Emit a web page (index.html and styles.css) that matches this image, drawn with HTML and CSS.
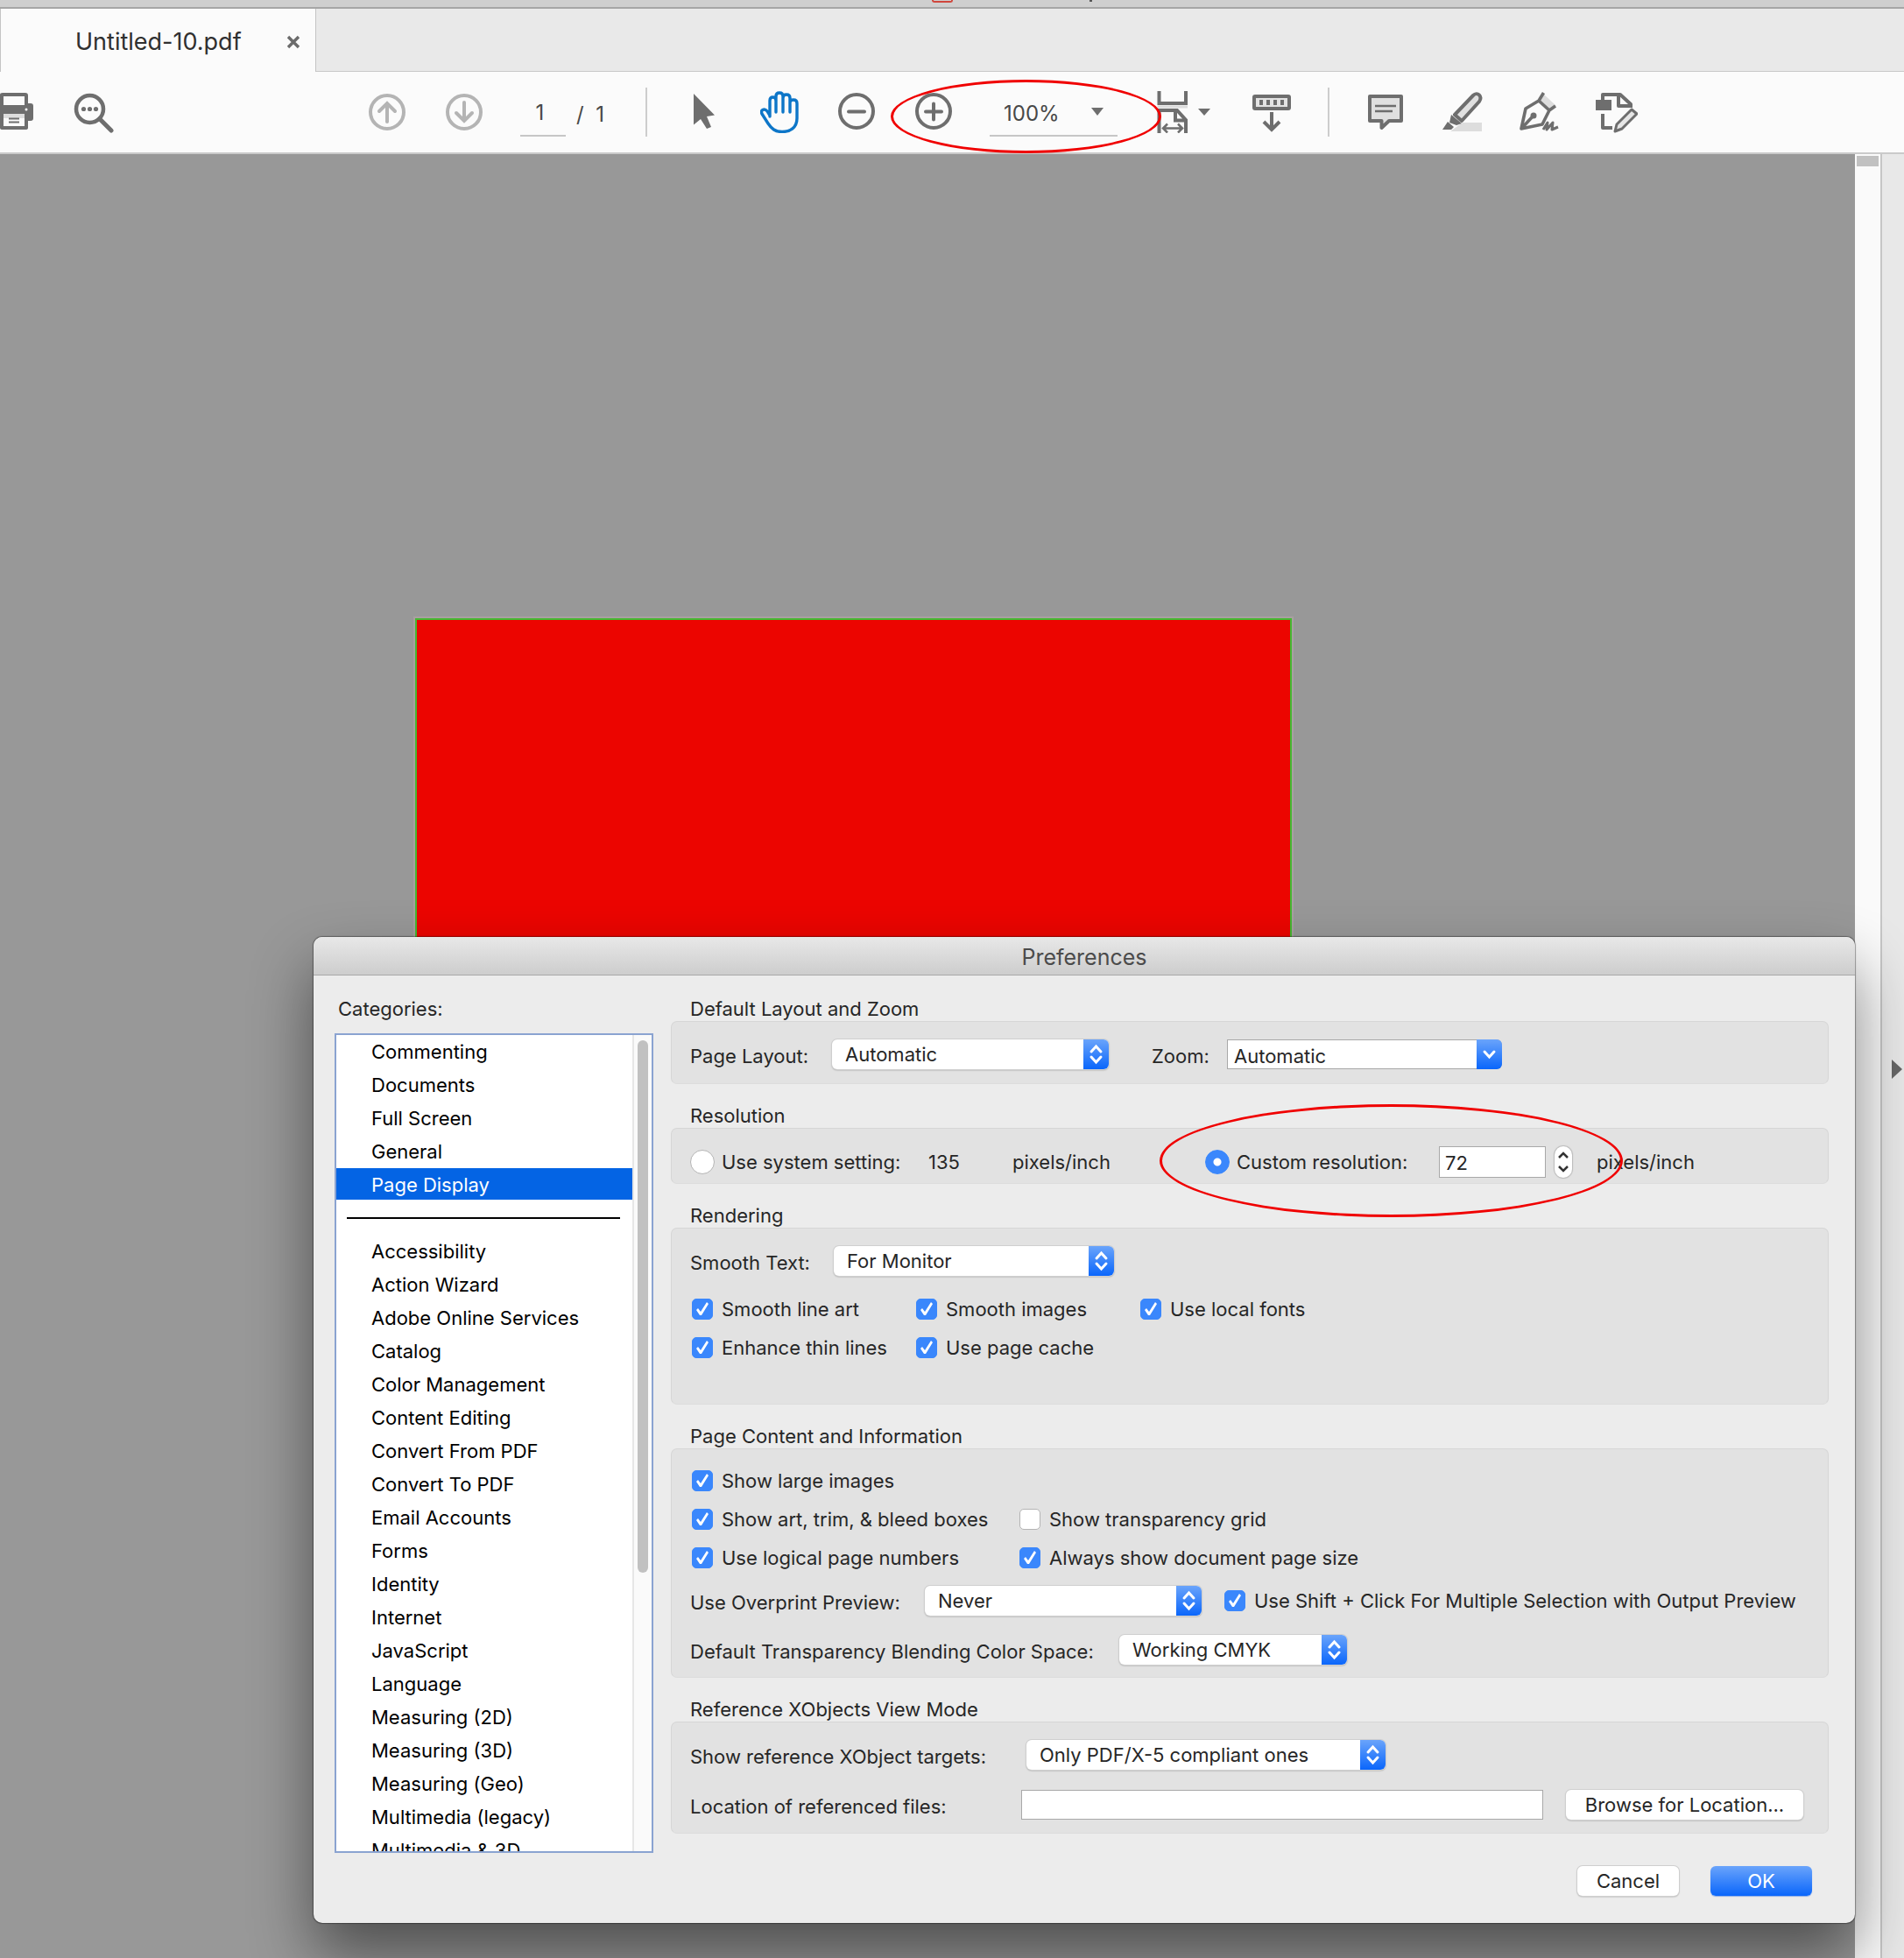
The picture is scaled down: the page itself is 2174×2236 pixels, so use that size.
FILE: index.html
```html
<!DOCTYPE html>
<html lang="en">
<head>
<meta charset="utf-8">
<title>Untitled-10.pdf</title>
<link rel="stylesheet" href="styles.css">
</head>
<body>
<div class="app">
  <div class="titlebar"><span class="title-icon"></span><span class="title-mark"></span></div>
  <nav class="tabs">
    <div class="tab"><a class="tab-name" href="#document">Untitled-10.pdf</a>
      <button class="tab-close" aria-label="Close tab"><svg width="16" height="16" viewBox="0 0 16 16"><path d="M2 2L14 14M14 2L2 14" stroke="#6b6b6b" stroke-width="3.400"/></svg></button>
    </div>
  </nav>
  <div class="toolbar">
    <button class="tool tool-print" aria-label="Print"><svg class="icon" viewBox="0 0 48 48"><path d="M0 4q0-2 3-2h26q3 0 3 3v9h3q3 0 3 3v14q0 3-3 3h-3v8q0 2-3 2H3q-3 0-3-2z" fill="#6e6e6e"/><path d="M4 6h24v10H4zM4 30h24v10H4z" fill="#fbfbfb"/><path d="M4 26h24v5H4z" fill="#ddd"/><path d="M10 31.500h12M10 35.500h12" stroke="#6e6e6e" stroke-width="2"/><circle cx="30" cy="21" r="1.500" fill="#fff"/></svg></button>
    <button class="tool" aria-label="Find"><svg class="icon" viewBox="0 0 48 48"><circle cx="19.500" cy="20.500" r="15.500" fill="none" stroke="#6e6e6e" stroke-width="4.500"/><path d="M31 32L44 45" stroke="#6e6e6e" stroke-width="5" stroke-linecap="round"/><g fill="#6e6e6e"><circle cx="12.500" cy="20.500" r="2.600"/><circle cx="19.500" cy="20.500" r="2.600"/><circle cx="26.500" cy="20.500" r="2.600"/></g></svg></button>
    <button class="tool tool-first" aria-label="Previous page"><svg class="icon" viewBox="0 0 48 48"><g fill="none" stroke="#b4b4b4" stroke-width="4"><circle cx="24" cy="24" r="19"/><path d="M24 35V15M15 23L24 14L33 23" stroke-linecap="round"/></g></svg></button>
    <button class="tool" aria-label="Next page"><svg class="icon" viewBox="0 0 48 48"><g fill="none" stroke="#b4b4b4" stroke-width="4"><circle cx="24" cy="24" r="19"/><path d="M24 13V33M15 25L24 34L33 25" stroke-linecap="round"/></g></svg></button>
    <input class="page-input" aria-label="Page number" value="1">
    <span class="page-total">/&nbsp; 1</span>
    <span class="divider"></span>
    <button class="tool" aria-label="Select"><svg class="icon" viewBox="0 0 48 48"><path d="M12 3L36 27.500L27 29L32 41L27 43L20 32L12 38.500z" fill="#6e6e6e"/></svg></button>
    <button class="tool" aria-label="Pan"><svg class="icon" viewBox="0 0 48 48"><path d="M11 29V11q0-4 3.500-4t3.500 4V24M18 12V6q0-4 4-4t4 4V24M26 8q0-4 4-4t4 4V24M34 13q0-3 4-3t4 4V31C42 42 34 46.500 25 46.500C17 46.500 13 43 9 37L2 26C0 21 5 19.500 8 23L11 28" fill="none" stroke="#0d76c8" stroke-width="3.400" stroke-linecap="round" stroke-linejoin="round"/></svg></button>
    <button class="tool" aria-label="Zoom out"><svg class="icon" viewBox="0 0 48 48"><g fill="none" stroke="#6e6e6e" stroke-width="4"><circle cx="22" cy="23" r="19"/><path d="M13 23.500H31" stroke-linecap="round"/></g></svg></button>
    <div class="zoom-group">
      <button class="tool" aria-label="Zoom in"><svg class="icon" viewBox="0 0 48 48"><g fill="none" stroke="#6e6e6e" stroke-width="4"><circle cx="22" cy="23" r="19"/><path d="M13 23.500H31M22 14.500V32.500" stroke-linecap="round"/></g></svg></button>
      <button class="zoom-value"><span>100%</span><svg width="14" height="9" viewBox="0 0 14 9"><path d="M0 0h14L7 9z" fill="#6e6e6e"/></svg></button>
      <span class="mark mark-zoom"></span>
    </div>
    <button class="tool-fit" aria-label="Fit width"><svg class="icon-wide" viewBox="0 0 72 48"><path d="M7.500 0V14H38V0" fill="none" stroke="#6e6e6e" stroke-width="4"/><path d="M5.500 16.500h34.500v3H5.500z" fill="#ddd"/><g fill="none" stroke="#6e6e6e"><path d="M7.500 48V22H28L38 33V48M26 22V33.500H38" stroke-width="4"/><path d="M13 42.500H33M17 37.500L12 42.500L17 47.500M29 37.500L34 42.500L29 47.500" stroke-width="2.500"/></g><path d="M52 20h14l-7 8z" fill="#6e6e6e"/></svg></button>
    <button class="tool tool-keys" aria-label="Scroll mode"><svg class="icon" viewBox="0 0 48 48"><rect x="4" y="6" width="40" height="14" rx="1" fill="#e3e3e3" stroke="#6e6e6e" stroke-width="4"/><path d="M12 10v6M20 10v6M28 10v6M36 10v6" stroke="#6e6e6e" stroke-width="4"/><path d="M24 24V43M15 35L24 44L33 35" fill="none" stroke="#6e6e6e" stroke-width="4"/></svg></button>
    <span class="divider divider-end"></span>
    <button class="tool" aria-label="Comment"><svg class="icon" viewBox="0 0 48 48"><path d="M6 6H42V34H28L19.500 42V34H6z" fill="#e0e0e0" stroke="#6e6e6e" stroke-width="4" stroke-linejoin="round"/><path d="M12 17H36M12 23H32" stroke="#6e6e6e" stroke-width="2.600"/></svg></button>
    <button class="tool" aria-label="Highlight"><svg class="icon" viewBox="0 0 48 48"><path d="M10 46L24 36H46V46z" fill="#ddd"/><path d="M36 5L15 27L23 34L43 12C47 6 41 0 36 5z" fill="#e0e0e0" stroke="#6e6e6e" stroke-width="4" stroke-linejoin="round"/><path d="M11 27L23 37L17 39L9 36zM7 35L14 41L11 44H1z" fill="#6e6e6e"/></svg></button>
    <button class="tool" aria-label="Sign"><svg class="icon" viewBox="0 0 48 48"><path d="M28 3L43 17L36 22L23 11z" fill="#ddd"/><g fill="none" stroke="#6e6e6e" stroke-width="3.600" stroke-linejoin="round"><path d="M28.500 2L23 11L35 22L42 17M23 11L8 20L3 43L27 38L35 22M3 43L16 29"/><path d="M28 44L33 36L32 44L39 36L38 44L45 41" stroke-width="3"/></g><circle cx="17" cy="28" r="3.500" fill="#6e6e6e"/></svg></button>
    <button class="tool" aria-label="Edit"><svg class="icon" viewBox="0 0 48 48"><path d="M0 10h18v12H0z" fill="#6e6e6e"/><g fill="none" stroke="#6e6e6e" stroke-width="4" stroke-linejoin="round"><path d="M8 12V4H28L40 15V19M26 4V17H39M8 26V42H19"/><path d="M22 46L24 38L41 21L47 26L30 43z" fill="#e6e6e6" stroke-width="3"/></g></svg></button>
  </div>
  <main class="workspace" id="document">
    <div class="canvas"><div class="sheet"></div></div>
    <div class="scrollbar"><span class="scroll-thumb"></span></div>
    <aside class="side-panel"><button class="side-toggle" aria-label="Open tools pane"><svg width="12" height="22" viewBox="0 0 12 22"><path d="M0 0L12 11L0 22z" fill="#666"/></svg></button></aside>

    <section class="dialog" role="dialog" aria-labelledby="dialog-title">
      <h1 class="dialog-title" id="dialog-title">Preferences</h1>
      <div class="dialog-body">
        <div class="categories">
          <h2 class="heading">Categories:</h2>
          <div class="list-box">
            <ul class="list">
              <li><a href="#c">Commenting</a></li>
              <li><a href="#c">Documents</a></li>
              <li><a href="#c">Full Screen</a></li>
              <li><a href="#c">General</a></li>
              <li class="selected"><a href="#c">Page Display</a></li>
              <li class="rule"></li>
              <li><a href="#c">Accessibility</a></li>
              <li><a href="#c">Action Wizard</a></li>
              <li><a href="#c">Adobe Online Services</a></li>
              <li><a href="#c">Catalog</a></li>
              <li><a href="#c">Color Management</a></li>
              <li><a href="#c">Content Editing</a></li>
              <li><a href="#c">Convert From PDF</a></li>
              <li><a href="#c">Convert To PDF</a></li>
              <li><a href="#c">Email Accounts</a></li>
              <li><a href="#c">Forms</a></li>
              <li><a href="#c">Identity</a></li>
              <li><a href="#c">Internet</a></li>
              <li><a href="#c">JavaScript</a></li>
              <li><a href="#c">Language</a></li>
              <li><a href="#c">Measuring (2D)</a></li>
              <li><a href="#c">Measuring (3D)</a></li>
              <li><a href="#c">Measuring (Geo)</a></li>
              <li><a href="#c">Multimedia (legacy)</a></li>
              <li><a href="#c">Multimedia &amp; 3D</a></li>
            </ul>
            <div class="list-scroll"><span class="list-thumb"></span></div>
          </div>
        </div>
        <form class="settings" id="settings">
          <section>
            <h2 class="heading">Default Layout and Zoom</h2>
            <div class="group group-layout">
              <div class="row">
                <label class="label w-162" for="layout">Page Layout:</label>
                <span class="popup w-316"><select id="layout"><option>Automatic</option></select><svg class="arrows" viewBox="0 0 29 34"><path d="M9 14L14.500 8L20 14M9 20L14.500 26L20 20"/></svg></span>
                <label class="label label-zoom" for="zoom">Zoom:</label>
                <span class="popup combo w-314"><select id="zoom"><option>Automatic</option></select><svg class="arrows" viewBox="0 0 29 34"><path d="M9 14L14.500 20L20 14"/></svg></span>
              </div>
            </div>
          </section>
          <section class="resolution">
            <h2 class="heading">Resolution</h2>
            <div class="group group-resolution">
              <div class="row">
                <label class="choice w-272"><input type="radio" name="res">Use system setting:</label>
                <span class="w-96">135</span><span class="w-220">pixels/inch</span>
                <input type="radio" name="res" id="custom" checked><label class="custom-label" for="custom">Custom resolution:</label>
                <input class="field field-res" aria-label="Custom resolution value" value="72">
                <button class="stepper" type="button" aria-label="Step value"><svg width="20" height="36" viewBox="0 0 20 36"><path d="M5 13L10 8L15 13M5 23L10 28L15 23" fill="none" stroke="#333" stroke-width="2.500"/></svg></button>
                <span>pixels/inch</span>
              </div>
            </div>
            <span class="mark mark-res"></span>
          </section>
          <section>
            <h2 class="heading">Rendering</h2>
            <div class="group group-rendering">
              <div class="row row-gap">
                <label class="label w-164" for="smooth">Smooth Text:</label>
                <span class="popup w-320"><select id="smooth"><option>For Monitor</option></select><svg class="arrows" viewBox="0 0 29 34"><path d="M9 14L14.500 8L20 14M9 20L14.500 26L20 20"/></svg></span>
              </div>
              <div class="checks checks-three">
                <label class="choice"><input type="checkbox" checked>Smooth line art</label>
                <label class="choice"><input type="checkbox" checked>Smooth images</label>
                <label class="choice"><input type="checkbox" checked>Use local fonts</label>
                <label class="choice"><input type="checkbox" checked>Enhance thin lines</label>
                <label class="choice"><input type="checkbox" checked>Use page cache</label>
              </div>
            </div>
          </section>
          <section>
            <h2 class="heading">Page Content and Information</h2>
            <div class="group group-content">
              <div class="checks checks-two">
                <label class="choice span"><input type="checkbox" checked>Show large images</label>
                <label class="choice"><input type="checkbox" checked>Show art, trim, &amp; bleed boxes</label>
                <label class="choice"><input type="checkbox">Show transparency grid</label>
                <label class="choice"><input type="checkbox" checked>Use logical page numbers</label>
                <label class="choice"><input type="checkbox" checked>Always show document page size</label>
              </div>
              <div class="row row-overprint">
                <label class="label w-268" for="overprint">Use Overprint Preview:</label>
                <span class="popup w-316"><select id="overprint"><option>Never</option></select><svg class="arrows" viewBox="0 0 29 34"><path d="M9 14L14.500 8L20 14M9 20L14.500 26L20 20"/></svg></span>
                <label class="choice choice-shift"><input type="checkbox" checked>Use Shift + Click For Multiple Selection with Output Preview</label>
              </div>
              <div class="row">
                <label class="label w-490" for="blend">Default Transparency Blending Color Space:</label>
                <span class="popup w-260"><select id="blend"><option>Working CMYK</option></select><svg class="arrows" viewBox="0 0 29 34"><path d="M9 14L14.500 8L20 14M9 20L14.500 26L20 20"/></svg></span>
              </div>
            </div>
          </section>
          <section>
            <h2 class="heading">Reference XObjects View Mode</h2>
            <div class="group group-xobjects">
              <div class="row row-targets">
                <label class="label w-384" for="targets">Show reference XObject targets:</label>
                <span class="popup w-410"><select id="targets"><option>Only PDF/X-5 compliant ones</option></select><svg class="arrows" viewBox="0 0 29 34"><path d="M9 14L14.500 8L20 14M9 20L14.500 26L20 20"/></svg></span>
              </div>
              <div class="row row-location">
                <label class="label w-378" for="location">Location of referenced files:</label>
                <input class="field field-location" id="location">
                <button class="button button-browse" type="button">Browse for Location...</button>
              </div>
            </div>
          </section>
        </form>
      </div>
      <footer class="dialog-footer">
        <button class="button">Cancel</button>
        <button class="button primary">OK</button>
      </footer>
    </section>
  </main>
</div>
</body>
</html>
```
FILE: styles.css
```css
* { box-sizing: border-box; }
body { margin: 0; font-family: Inter, "Liberation Sans", sans-serif; font-size: 22px; line-height: 28px; color: #262626; }
button, input, select { font: inherit; color: inherit; margin: 0; padding: 0; border: 0; background: none; }
a { color: inherit; text-decoration: none; }
svg { display: block; flex: none; }
h1, h2, ul { margin: 0; padding: 0; font-weight: 400; list-style: none; }

.app { display: flex; flex-direction: column; min-height: 100vh; overflow: hidden; }

.titlebar { display: flex; height: 10px; padding-left: 1064px; background: #cfcfcf; border-bottom: 2px solid #a6a6a6; }
.title-icon { width: 24px; height: 3px; border: 2px solid #d0463c; border-top: 0; border-radius: 0 0 3px 3px; }
.title-mark { width: 3px; height: 2px; margin-left: 156px; background: #555; }

.tabs { display: flex; height: 72px; background: #e9e9e9; border-bottom: 1px solid #c8c8c8; }
.tab { display: flex; align-items: center; justify-content: space-between; width: 361px; height: 72px; padding: 4px 17px 0 85px; background: #fbfbfb; border: 1px solid #c4c4c4; border-width: 0 1px; }
.tab-name { font-size: 27px; color: #303030; }

.toolbar { display: flex; align-items: center; height: 94px; background: #fbfbfb; border-bottom: 2px solid #cacaca; color: #484848; font-size: 24px; }
.tool { display: flex; flex: none; justify-content: center; align-items: center; width: 88px; height: 88px; }
.icon { width: 48px; height: 48px; }
.icon-wide { width: 72px; height: 48px; }
.tool-print { width: 63px; justify-content: flex-start; }
.tool-first { margin-left: 247px; }
.page-input { width: 52px; height: 56px; margin-left: 20px; padding: 3px 7px 0 0; border-bottom: 2px solid #c6c6c6; text-align: center; }
.page-total { width: 91px; padding: 6px 0 0 12px; }
.divider { flex: none; width: 2px; height: 56px; margin-right: 21px; background: #cdcdcd; }
.zoom-group { position: relative; display: flex; align-items: center; }
.zoom-value { display: flex; align-items: center; justify-content: space-between; width: 146px; height: 56px; margin-left: 18px; padding: 0 16px; border-bottom: 2px solid #c6c6c6; }
.zoom-value span { padding-top: 5px; }
.tool-fit { margin-left: 40px; }
.tool-keys { margin-left: 20px; }
.divider-end { margin: 0 20px; }

.mark { position: absolute; border: 3px solid #f00000; border-radius: 50%; pointer-events: none; }
.mark-zoom { left: -7px; top: 7px; width: 309px; height: 84px; }
.mark-res { left: 558px; top: 1px; width: 529px; height: 129px; }

.workspace { position: relative; display: flex; flex: 1; min-height: 2060px; }
.canvas { flex: 1; padding: 530px 0 0 474px; background: #989898; }
.sheet { width: 1001px; height: 600px; background: #ec0500; border: 2px solid #45b832; outline: 2px solid #a8a0a0; }
.scrollbar { width: 29px; padding: 2px; background: #fafafa; }
.scroll-thumb { display: block; height: 12px; background: #c1c1c1; }
.side-panel { display: flex; width: 27px; padding-top: 1034px; justify-content: flex-end; align-items: flex-start; background: #e8e8e8; border-left: 2px solid #c6c6c6; }
.side-toggle { padding-right: 2px; }

.dialog { position: absolute; left: 358px; right: 56px; top: 894px; background: #ececec; border-radius: 10px; box-shadow: 0 0 1px 1px rgba(0,0,0,.35), 0 36px 70px rgba(0,0,0,.48); }
.dialog-title { height: 44px; line-height: 46px; font-size: 25px; text-align: center; color: #4b4b4b; background: linear-gradient(#e8e8e8, #cdcdcd); border-bottom: 1px solid #a8a8a8; border-radius: 10px 10px 0 0; }
.dialog-body { display: grid; grid-template-columns: 364px 1fr; gap: 20px; padding: 24px 30px 0 24px; }
.heading { font-size: inherit; line-height: 28px; }

.categories { display: flex; flex-direction: column; gap: 14px; }
.categories .heading { padding-left: 4px; }
.list-box { display: flex; flex: 1; contain: size; overflow: hidden; border: 2px solid #8aa3d1; background: #fff; color: #000; }
.list { flex: 1; overflow: hidden; }
.list li { height: 36px; margin-bottom: 2px; padding-left: 40px; line-height: 38px; }
.list .selected { background: #0464e4; color: #fff; }
.list .rule { height: 2px; margin: 20px 14px 18px 12px; padding: 0; background: #000; }
.list-scroll { width: 22px; padding: 6px 4px; background: #fafafa; border-left: 2px solid #e6e6e6; }
.list-thumb { display: block; width: 12px; height: 608px; border-radius: 6px; background: #c1c1c1; }

.settings { display: flex; flex-direction: column; gap: 22px; padding-bottom: 22px; }
.settings .heading { padding-left: 22px; }
.resolution { position: relative; }
.group { padding: 20px 28px 14px 21px; background: #e2e2e2; border: 1px solid #d6d6d6; border-bottom-color: #dcdcdc; border-radius: 7px; }
.group-layout { padding-bottom: 16px; }
.group-resolution { padding-bottom: 6px; }
.group-rendering { padding-bottom: 52px; }
.group-content { padding-top: 24px; }
.row { display: flex; align-items: center; }
.row > * { flex: none; }
.row-gap { margin-bottom: 26px; }
.row-overprint { margin: 20px 0 22px; }
.row-targets { margin-bottom: 22px; }
.row-location { height: 36px; }
.label { padding-top: 4px; white-space: nowrap; }
.label-zoom { width: 86px; margin-left: 49px; }
.w-96 { width: 96px; } .w-162 { width: 162px; } .w-164 { width: 164px; } .w-220 { width: 220px; }
.w-260 { width: 260px; } .w-268 { width: 268px; } .w-272 { width: 272px; } .w-314 { width: 314px; }
.w-316 { width: 316px; } .w-320 { width: 320px; } .w-378 { width: 378px; } .w-384 { width: 384px; }
.w-410 { width: 410px; } .w-490 { width: 490px; }

.choice { display: flex; align-items: center; gap: 10px; white-space: nowrap; }
.row .w-272 { gap: 8px; }
.checks { display: grid; gap: 20px 0; grid-auto-rows: 24px; padding-left: 2px; }
.checks-three { grid-template-columns: 256px 256px 1fr; }
.checks-two { grid-template-columns: 374px 1fr; }
.span { grid-column: 1 / -1; }
.choice-shift { margin-left: 26px; }
.custom-label { width: 239px; padding-left: 8px; }

input[type="checkbox"], input[type="radio"] { appearance: none; flex: none; width: 24px; height: 24px; background: #fff; border: 1px solid #b4b4b4; border-radius: 5px; }
input[type="radio"] { width: 28px; height: 28px; border-radius: 50%; }
input[type="checkbox"]:checked { background: #3a87fc; border-color: #3a87fc; }
input[type="checkbox"]:checked::before { content: ""; display: block; width: 22px; height: 22px; background: #fff; clip-path: polygon(4px 12px, 6px 10px, 9px 14px, 16px 3px, 18px 5px, 10px 18px, 8px 18px); }
input[type="radio"]:checked { background: radial-gradient(circle, #fff 4px, #3a87fc 5px); border-color: #3a87fc; }

.popup { display: grid; height: 34px; background: #fff; border-radius: 6px; box-shadow: 0 0 0 1px #cfcfcf, 0 1px 2px rgba(0,0,0,.4); overflow: hidden; }
.popup > * { grid-area: 1 / 1; }
.popup select { appearance: none; width: 100%; height: 34px; padding: 0 36px 0 15px; outline: 0; }
.arrows { justify-self: end; width: 29px; height: 34px; background: linear-gradient(#6aa4fb, #0a66fb); fill: none; stroke: #fff; stroke-width: 3; stroke-linecap: round; pointer-events: none; }
.combo { border-radius: 0 6px 6px 0; box-shadow: inset 0 0 0 1px #a8a8a8; }
.combo select { padding-left: 8px; padding-top: 3px; }

.field { height: 34px; padding: 2px 6px 0; background: #fff; border: 1px solid #a8a8a8; }
.field-res { width: 122px; height: 36px; }
.field-location { width: 596px; }
.stepper { width: 20px; height: 36px; margin: 0 28px 0 10px; background: #fff; border-radius: 10px; box-shadow: 0 0 1px 1px #bbb; }
.button { width: 116px; height: 34px; background: #fff; border-radius: 6px; box-shadow: 0 0 0 1px #cfcfcf, 0 1px 2px rgba(0,0,0,.4); white-space: nowrap; }
.button-browse { width: 271px; margin-left: 26px; }
.primary { color: #fff; background: linear-gradient(#6aa4fb, #0a66fb); box-shadow: 0 1px 1px rgba(0,80,220,.4); }
.dialog-footer { display: flex; justify-content: flex-end; gap: 36px; padding: 15px 49px 31px; }
```
